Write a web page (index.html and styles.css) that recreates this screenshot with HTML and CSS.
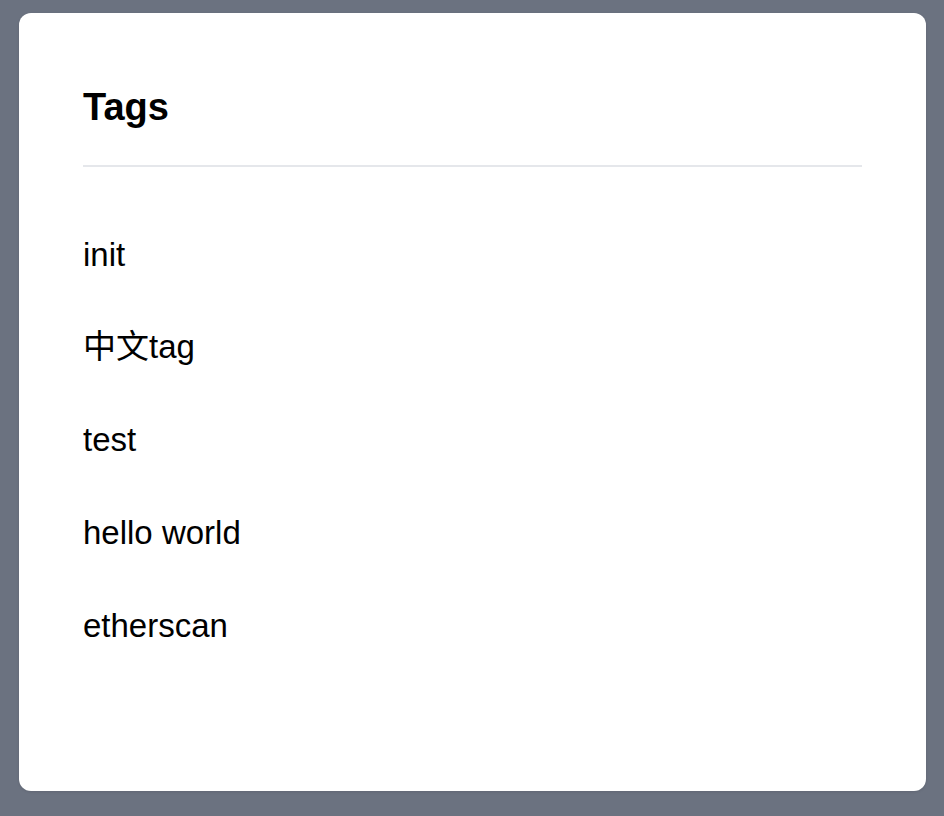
FILE: index.html
```html
<!DOCTYPE html>
<html lang="en">
<head>
<meta charset="utf-8">
<title>Tags</title>
<link rel="stylesheet" href="styles.css">
</head>
<body>
<div class="card">
  <h1 class="title">Tags</h1>
  <hr class="divider">
  <ul class="tag-list">
    <li class="tag">init</li>
    <li class="tag">中文tag</li>
    <li class="tag">test</li>
    <li class="tag">hello world</li>
    <li class="tag">etherscan</li>
  </ul>
</div>
</body>
</html>
```

FILE: styles.css
```css
html, body {
  margin: 0;
  padding: 0;
}
body {
  background: #6b7280;
  width: 944px;
  height: 816px;
  font-family: "Liberation Sans", "Noto Sans CJK SC", Arial, sans-serif;
  color: #000;
}
.card {
  box-sizing: border-box;
  margin: 13px 0 0 19px;
  width: 907px;
  height: 778px;
  background: #fff;
  border-radius: 12px;
  padding: 72px 64px 0 64px;
  box-shadow: 0 1px 3px rgba(0, 0, 0, 0.1);
}
.title {
  margin: 0;
  font-size: 38px;
  line-height: 44px;
  font-weight: 700;
}
.divider {
  margin: 36px 0 0 0;
  border: 0;
  height: 2px;
  background: #e5e7eb;
}
.tag-list {
  list-style: none;
  margin: 67.5px 0 0 0;
  padding: 0;
  display: flex;
  flex-direction: column;
  gap: 52.75px;
}
.tag {
  font-size: 33px;
  line-height: 40px;
}
```
